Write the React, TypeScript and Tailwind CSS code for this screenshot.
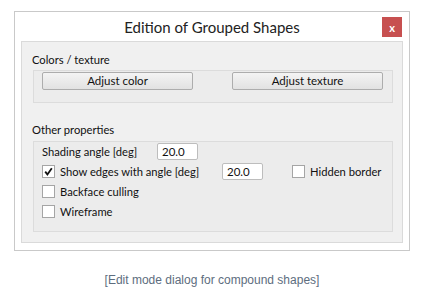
import React from "react";

const ui = { fontFamily: 'Lato, "Noto Sans", sans-serif' };

function Check({ checked }: { checked?: boolean }) {
  return (
    <div className="w-[13px] h-[13px] border border-[#a5a5a5] bg-white flex items-center justify-center shrink-0">
      {checked && (
        <svg width="9" height="9" viewBox="0 0 9 9">
          <path d="M1.2 4.6 L3.4 7.4 L7.8 1.2" stroke="#111" strokeWidth="1.8" fill="none" />
        </svg>
      )}
    </div>
  );
}

function Field({ value }: { value: string }) {
  return (
    <div className="w-[41px] h-[17px] border border-[#bdbdbd] rounded-[2px] bg-white flex items-center pl-[4px] text-[11.5px] text-[#111] leading-none shrink-0">
      {value}
    </div>
  );
}

function Btn({ label }: { label: string }) {
  return (
    <div className="w-[151px] h-[18px] border border-[#adadad] rounded-[2px] bg-gradient-to-b from-[#f4f4f4] to-[#e2e2e2] flex items-center justify-center text-[11.5px] text-[#111] leading-none whitespace-nowrap">
      {label}
    </div>
  );
}

export default function App() {
  return (
    <div className="w-[424px] h-[288px] bg-white relative overflow-hidden" style={ui}>
      <div className="ml-[14px] mt-[11px] w-[396px] h-[240px] border border-[#c9c9c9] bg-white flex flex-col">
        <div className="h-[29px] relative flex items-center justify-center">
          <span className="text-[15px] text-[#222] leading-none mt-[1px] whitespace-nowrap">Edition of Grouped Shapes</span>
          <div className="absolute left-[367px] top-[5px] w-[20px] h-[20px] bg-[#c75050] flex items-center justify-center text-white text-[11px] font-bold leading-none">
            x
          </div>
        </div>
        <div className="ml-[6px] w-[382px] h-[202px] border border-[#dadada] bg-[#f0f0f0] flex flex-col text-[11.2px] text-[#111] whitespace-nowrap">
          <div className="h-[28px] pl-[10px] flex items-end pb-[5px] leading-none">Colors / texture</div>
          <div className="ml-[11px] w-[360px] h-[33px] border border-[#dcdcdc] bg-[#ececec] flex pt-[1px] pl-[8px] gap-[39px]">
            <Btn label="Adjust color" />
            <Btn label="Adjust texture" />
          </div>
          <div className="h-[38px] pl-[10px] flex items-end pb-[6px] leading-none">Other properties</div>
          <div className="ml-[11px] w-[360px] h-[91px] border border-[#dcdcdc] bg-[#ececec] flex flex-col pl-[8px] pt-[1px]">
            <div className="h-[17px] flex items-center">
              <span className="w-[115px] shrink-0 leading-none">Shading angle [deg]</span>
              <Field value="20.0" />
            </div>
            <div className="h-[17px] mt-[3px] flex items-center">
              <Check checked />
              <span className="ml-[5px] w-[162px] shrink-0 leading-none">Show edges with angle [deg]</span>
              <Field value="20.0" />
              <div className="ml-[29px]"><Check /></div>
              <span className="ml-[5px] leading-none">Hidden border</span>
            </div>
            <div className="h-[13px] mt-[5px] flex items-center">
              <Check />
              <span className="ml-[5px] leading-none">Backface culling</span>
            </div>
            <div className="h-[13px] mt-[7px] flex items-center">
              <Check />
              <span className="ml-[5px] leading-none">Wireframe</span>
            </div>
          </div>
        </div>
      </div>
      <div
        className="mt-[23px] text-center text-[12px] text-[#5d6d7e] leading-none"
        style={{ fontFamily: '"Liberation Sans", Arial, sans-serif' }}
      >
        [Edit mode dialog for compound shapes]
      </div>
    </div>
  );
}
